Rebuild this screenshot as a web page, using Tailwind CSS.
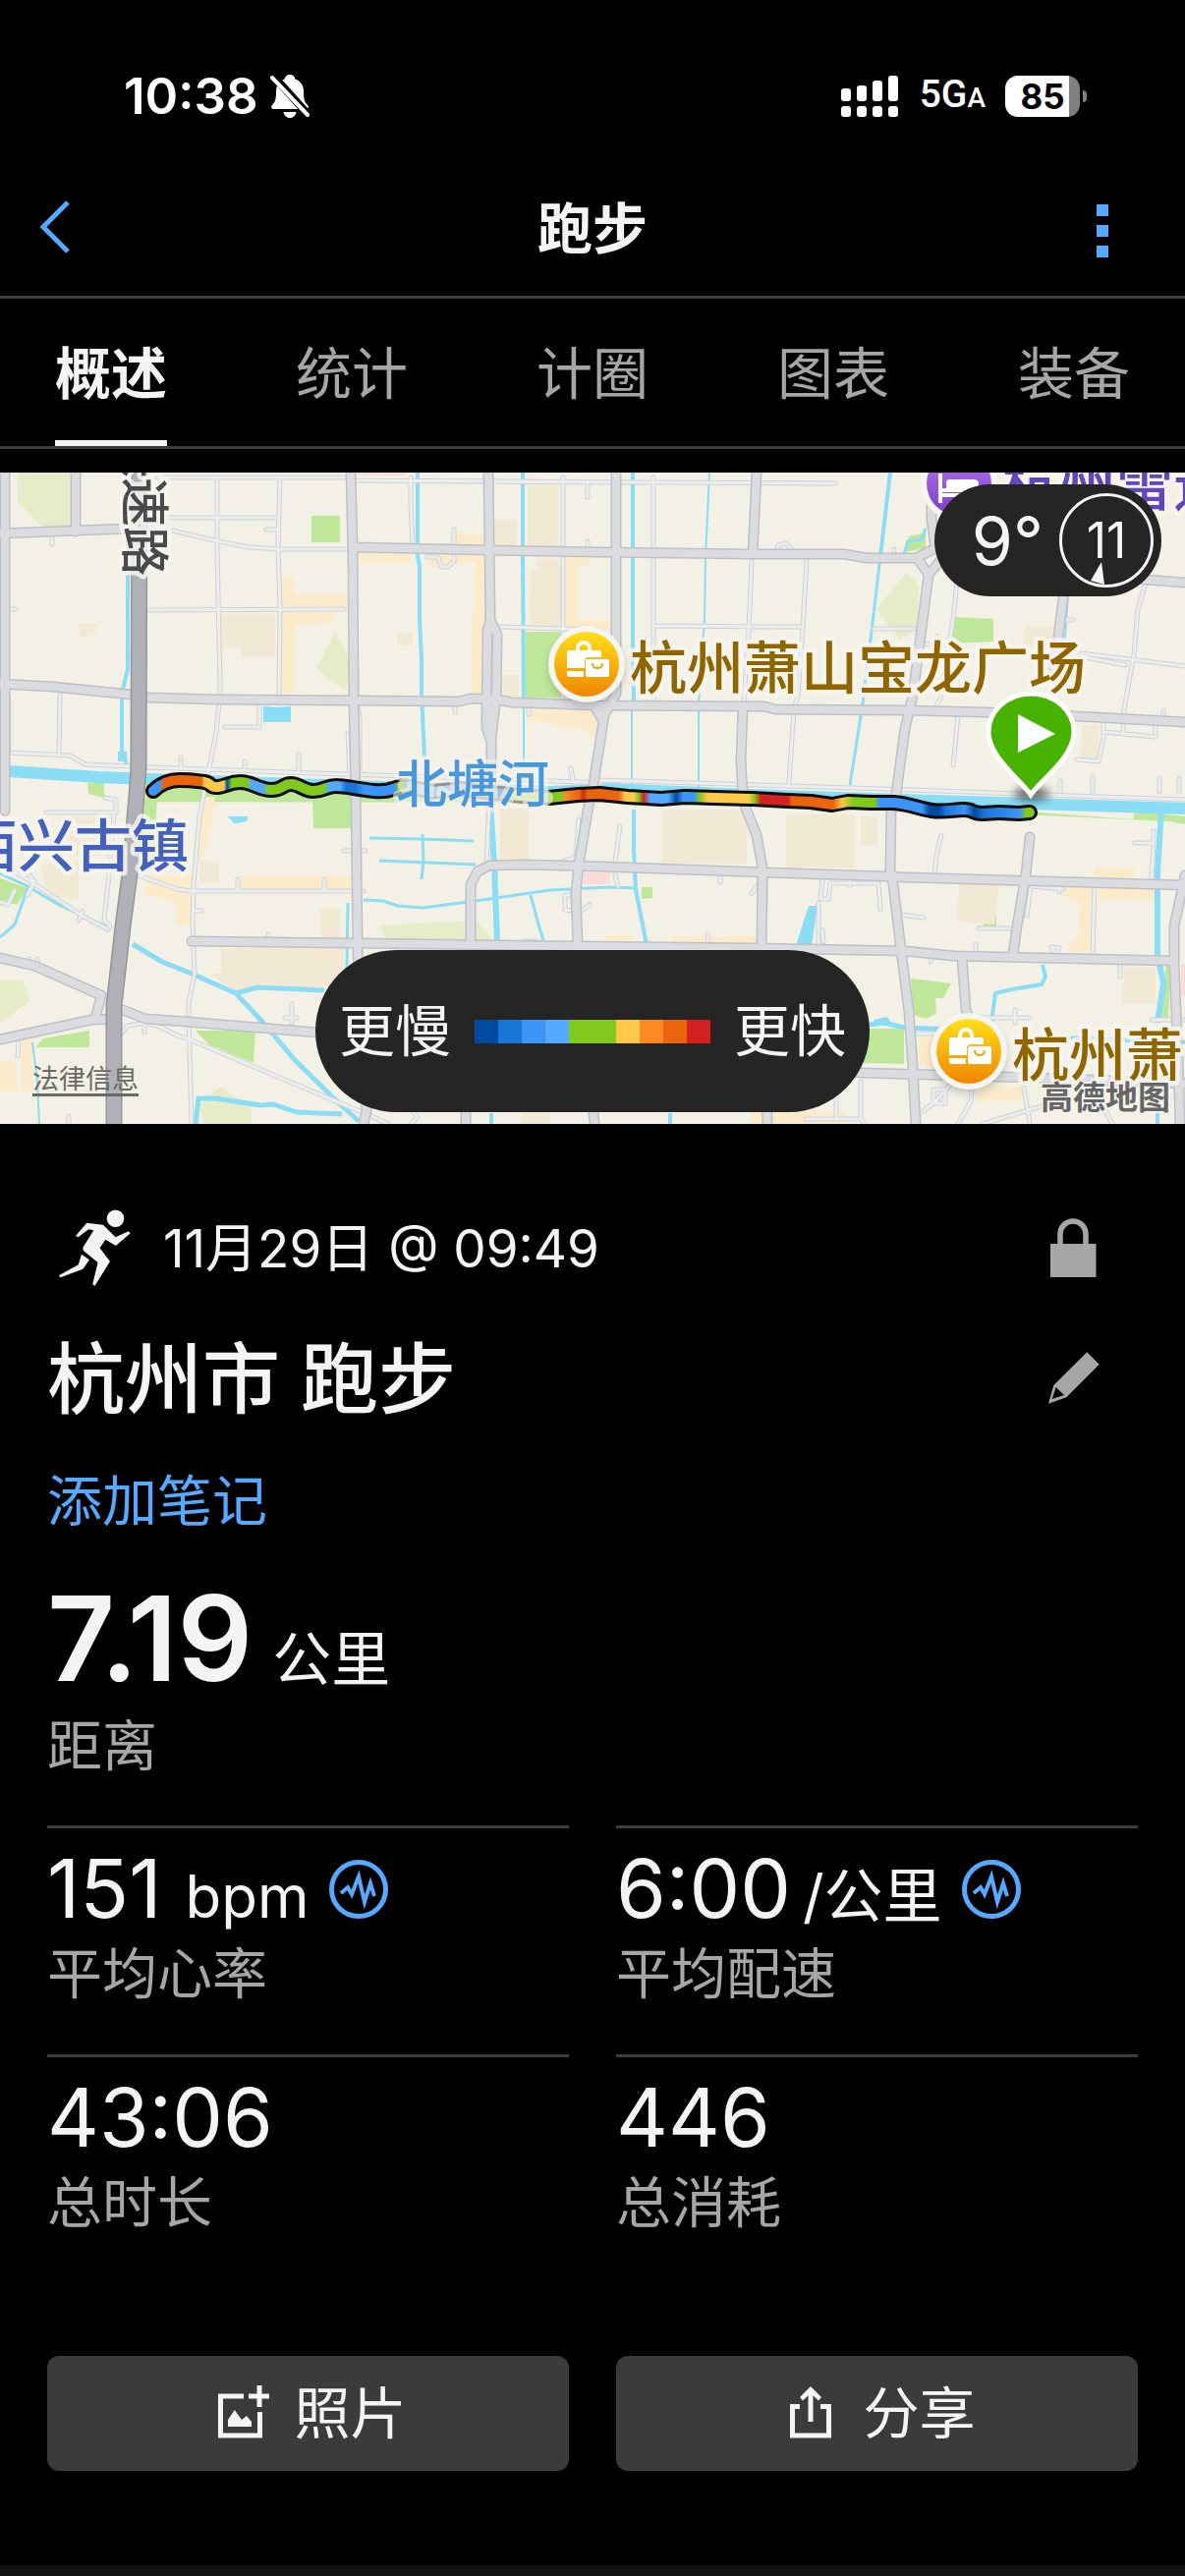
<!DOCTYPE html>
<html lang="zh-CN">

<head>
    <meta charset="UTF-8">
    <meta name="viewport" content="width=device-width, initial-scale=1.0">
    <title>跑步</title>
    <script src="https://cdn.jsdelivr.net/npm/@tailwindcss/browser@4"></script>
</head>

<body class="bg-black text-[#f4f4f4] font-['Inter','Noto_Sans_CJK_SC',sans-serif]">
    <div class="flex min-h-screen flex-col">

        <!-- Status bar -->
        <div class="flex h-40 items-center justify-between pt-9 pr-[100px] pl-[126px] text-white">
            <div class="flex items-center gap-3">
                <span class="text-[51px] leading-[60px] font-semibold">10:38</span>
                <svg class="h-11 w-10" viewBox="0 0 40 44" fill="#fff">
                    <path d="M20 0c3 0 5 2 5.500 4.500C31 6.500 34 11 34 17c0 8 1 11 4 14 1.500 1.500 1 4-2 4H4c-3 0-3.500-2.500-2-4 3-3 4-6 4-14C6 11 9 6.500 14.500 4.500 15 2 17 0 20 0z" />
                    <path d="M13.500 38h13c-.5 3.500-3 6-6.500 6s-6-2.500-6.500-6z" />
                    <path d="M3 1L39 41" stroke="#000" stroke-width="8" />
                    <path d="M2 3L38 41" stroke="#fff" stroke-width="4" stroke-linecap="round" />
                </svg>
            </div>
            <div class="flex items-center gap-5">
                <svg class="h-[42px] w-[60px]" viewBox="0 0 60 42" fill="#fff">
                    <rect x="0" y="13" width="10" height="13" rx="3" />
                    <rect x="16" y="10" width="10" height="16" rx="3" />
                    <rect x="32" y="5" width="10" height="21" rx="3" />
                    <rect x="48" y="0" width="10" height="26" rx="3" />
                    <rect x="0" y="31" width="10" height="11" rx="3" />
                    <rect x="16" y="31" width="10" height="11" rx="3" />
                    <rect x="32" y="31" width="10" height="11" rx="3" />
                    <rect x="48" y="31" width="10" height="11" rx="3" />
                </svg>
                <span class="font-['Roboto',sans-serif] text-[39px] leading-[60px] font-medium">5G<span class="text-[28px]">A</span></span>
                <div class="flex items-center gap-[3px]">
                    <div class="flex h-[42px] w-[76px] items-center justify-center rounded-[13px] bg-linear-to-r from-white from-85% to-[#808080] to-85% text-[35px] leading-none font-bold text-black">85</div>
                    <div class="h-3 w-1 rounded-r-full bg-[#808080]"></div>
                </div>
            </div>
        </div>

        <!-- Header -->
        <header class="flex h-36 items-center justify-between border-b-[3px] border-[#3c3c3c] pr-[74px] pl-10">
            <button type="button" aria-label="返回" class="w-[54px]">
                <svg class="h-[54px] w-8" viewBox="0 0 32 54" fill="none" stroke="#55a9ff" stroke-width="5">
                    <path d="M29 2L4 27L29 52" />
                </svg>
            </button>
            <h1 class="pt-1 text-[56px] leading-[64px] font-semibold">跑步</h1>
            <button type="button" aria-label="更多" class="flex w-5 flex-col items-center gap-[9px] pt-2">
                <span class="size-3 bg-[#55a9ff]"></span>
                <span class="size-3 bg-[#55a9ff]"></span>
                <span class="size-3 bg-[#55a9ff]"></span>
            </button>
        </header>

        <nav class="flex h-[153px] justify-between border-b-[3px] border-[#3c3c3c] px-14 pt-1 text-[57px] leading-[64px] text-[#a6a6a6]">
            <a href="#" class="flex items-center border-y-[6px] border-t-transparent border-b-[#f4f4f4] font-semibold text-[#f4f4f4]">概述</a>
            <a href="#" class="flex items-center">统计</a>
            <a href="#" class="flex items-center">计圈</a>
            <a href="#" class="flex items-center">图表</a>
            <a href="#" class="flex items-center">装备</a>
        </nav>

        <!-- Map -->
        <section class="relative mt-6 h-[663px] overflow-hidden bg-[#f3f0e5]">
            <svg class="h-full w-full" viewBox="0 0 1206 663" preserveAspectRatio="xMidYMid slice" font-family="'Noto Sans CJK SC', sans-serif">
                <defs>
                    <linearGradient id="pace" gradientUnits="userSpaceOnUse" x1="100" x2="1100" y1="0" y2="0">
                        <stop offset=".062" stop-color="#3c95f6" /><stop offset=".067" stop-color="#e9640c" />
                        <stop offset=".105" stop-color="#e9640c" /><stop offset=".108" stop-color="#fdc94b" />
                        <stop offset=".128" stop-color="#fdc94b" /><stop offset=".131" stop-color="#004a9f" />
                        <stop offset=".136" stop-color="#82c91e" /><stop offset=".152" stop-color="#82c91e" />
                        <stop offset=".155" stop-color="#55a9ff" /><stop offset=".169" stop-color="#55a9ff" />
                        <stop offset=".172" stop-color="#82c91e" /><stop offset=".230" stop-color="#82c91e" />
                        <stop offset=".235" stop-color="#55a9ff" /><stop offset=".246" stop-color="#55a9ff" />
                        <stop offset=".252" stop-color="#1975d6" /><stop offset=".262" stop-color="#1975d6" />
                        <stop offset=".270" stop-color="#3c95f6" /><stop offset=".302" stop-color="#3c95f6" />
                        <stop offset=".305" stop-color="#82c91e" /><stop offset=".320" stop-color="#55a9ff" />
                        <stop offset=".400" stop-color="#55a9ff" /><stop offset=".410" stop-color="#1975d6" />
                        <stop offset=".420" stop-color="#82c91e" /><stop offset=".472" stop-color="#82c91e" />
                        <stop offset=".475" stop-color="#fb8a25" /><stop offset=".490" stop-color="#e9640c" />
                        <stop offset=".494" stop-color="#d32121" /><stop offset=".498" stop-color="#e9640c" />
                        <stop offset=".530" stop-color="#e9640c" /><stop offset=".536" stop-color="#fdc94b" />
                        <stop offset=".545" stop-color="#fdc94b" /><stop offset=".550" stop-color="#82c91e" />
                        <stop offset=".555" stop-color="#d32121" /><stop offset=".562" stop-color="#55a9ff" />
                        <stop offset=".580" stop-color="#55a9ff" /><stop offset=".588" stop-color="#004a9f" />
                        <stop offset=".595" stop-color="#3c95f6" /><stop offset=".606" stop-color="#3c95f6" />
                        <stop offset=".612" stop-color="#82c91e" /><stop offset=".620" stop-color="#fdc94b" />
                        <stop offset=".662" stop-color="#fdc94b" /><stop offset=".668" stop-color="#82c91e" />
                        <stop offset=".674" stop-color="#d32121" /><stop offset=".702" stop-color="#d32121" />
                        <stop offset=".706" stop-color="#e9640c" /><stop offset=".748" stop-color="#e9640c" />
                        <stop offset=".757" stop-color="#fdc94b" /><stop offset=".768" stop-color="#82c91e" />
                        <stop offset=".790" stop-color="#82c91e" /><stop offset=".795" stop-color="#3c95f6" />
                        <stop offset=".838" stop-color="#3c95f6" /><stop offset=".846" stop-color="#004a9f" />
                        <stop offset=".856" stop-color="#004a9f" /><stop offset=".862" stop-color="#1975d6" />
                        <stop offset=".882" stop-color="#3c95f6" /><stop offset=".892" stop-color="#004a9f" />
                        <stop offset=".902" stop-color="#1975d6" /><stop offset=".938" stop-color="#3c95f6" />
                        <stop offset=".944" stop-color="#82c91e" />
                    </linearGradient>
                    <linearGradient id="shop" x1="0" x2="0" y1="0" y2="1">
                        <stop offset="0" stop-color="#ffdf1c" /><stop offset="1" stop-color="#f08600" />
                    </linearGradient>
                    <linearGradient id="hotel" x1="0" x2="0" y1="0" y2="1">
                        <stop offset="0" stop-color="#b774ee" /><stop offset="1" stop-color="#7a3fc9" />
                    </linearGradient>
                    <filter id="soft" x="-50%" y="-50%" width="200%" height="200%">
                        <feGaussianBlur stdDeviation="5" />
                    </filter>
                    <g id="shop-pin">
                        <circle r="38" cy="5" fill="#000" opacity=".2" filter="url(#soft)" />
                        <circle r="39" fill="#f6f5f0" />
                        <circle r="33" fill="url(#shop)" />
                        <path d="M-9 -14v-2a6 6 0 0 1 12 0v2" fill="none" stroke="#fff" stroke-width="4" />
                        <path d="M-18 -14h31q2 0 2 2v5H2q-4 0-4 4v7h-18v-16q0-2 2-2zM-20 7h17v6h-15q-2 0-2-2z" fill="#fff" />
                        <rect x="-1" y="-5" width="24" height="18" rx="2" fill="#fff" />
                        <path d="M6 -1q0 5 5 5t5-5" fill="none" stroke="#f4a610" stroke-width="2" />
                    </g>
                    <!-- road geometry is stroked twice: casing first, then fill -->
                    <g id="minor">
                        <path d="M160 5H352M362 8L850 11M362 8L600 10M132 46H282M175 59L218 69L253 76L283 78H354M221 5V75L223 175L224 210V229M285 5L283 78L285 135L284 230M418 5V30L420 76M573 5V232M435 86H446L449 96H456L462 90V85M462 58V74M598 10V25M598 70V76" />
                        <path d="M151 140L350 139M504 157L573 159L610 160M9 139H16M53 65V73M271 58H283V70M9 230L9 284M61 226L60 285M9 285L71 288L87 297L132 299L150 300L350 307L540 313L610 316" />
                        <path d="M264 233V259H229M223 233L220 265L211 310L203 350L197 420L196 460L198 510L192 540V553L195 663M184 291V300M249 294V301M304 287V302M363 233L366 250V308M354 265L356 306M463 238V244M538 240V246M581 301L583 312M608 313L900 322L1206 333" />
                        <path d="M665 5V232M666 156L815 157M889 159H930M790 82L792 74L800 72L808 80M821 87L817 160L812 228L808 240L803 316M910 78V85M974 110L970 150L957 230L952 240M954 166V180M937 174L963 176M765 90L762 161L757 235M975 247L970 298M1166 112L1158 140L1154 185L1143 247M1084 150H1092M1100 184L1206 197M1100 187L1145 196M1123 250V270L1118 294L1096 292M1123 264L1176 269V252M1143 250V264M1184 243V250M1079 314V325M1112 309V325M1180 311V325M1200 312V325" />
                        <path d="M47 346H118V333L107 331M0 398L28 414L85 452L110 465M116 346L112 400L106 455L112 462M30 410L35 416L28 430M80 456L84 447M140 410L180 424L195 426L360 426H370M242 426V414M330 425V414M205 446H198M273 470V474M350 385H372M498 334L495 400M589 353L586 392L569 397M575 430H585M575 430V445L590 447L600 440M533 477H545" />
                        <path d="M30 495V502M38 495V506M124 570L130 563L148 560L163 564L178 572L195 578L380 656L395 663M147 562V570M19 576L18 594M297 541V560M290 555H302M70 655V663M0 437L8 440L15 425M420 650L425 656L418 663" />
                        <path d="M631 360L626 396V410L629 421M733 409V417M771 420L765 428M779 410V440L775 480M837 415L835 434H843L845 418H894L896 445M865 413V420M833 438V481M837 465L838 478M720 470L721 482M958 369L954 385L951 408M1155 377H1174L1172 413M1174 365V378M996 464H1031M1045 451L1049 421L1082 424M1078 419V427M1114 420L1112 492M917 450L940 453M993 480V488M1070 483L1078 484L1076 489L1071 486M1140 502V513M991 555H1048M1033 547V560M930 571H960M1172 557H1206M949 492L947 498M851 620V658M876 620V658H820M876 658L880 663M940 650L952 640L968 622M952 628H962V642H950V628M975 663L988 640L990 622M1042 626L1048 663M1000 663L1060 645L1080 635M1120 640L1132 663" />
                    </g>
                    <g id="major">
                        <path d="M5 0V344M77 0V60M0 62L78 59L132 57L165 55M357 0L359 80L360 232L362 330L364 480L366 560L373 649L370 663M362 76L498 79L610 81L766 83H859L882 87H932L952 77L948 47V0M934 88L945 104L929 227L921 261L912 327L907 339L906 406L909 419L917 486L925 549L929 606L932 663M965 80L945 104M1040 95L1166 109L1206 112" />
                        <path d="M497 0L499 150L496 161L495 260L500 274V334M499 150L506 165L505 227L500 270M0 215L54 218L134 226L150 229L222 231L360 232L467 233L479 230L506 231L521 234L610 237L778 238L789 241L921 242L1002 244L1095 248L1206 254" />
                        <path d="M627 0V225L615 247L604 317L599 339L589 399L586 429L588 479L596 560L605 663M770 0L766 83M756 239L754 294L756 327L758 339L770 369L776 402L775 480L781 663M1083 120L1077 167L1073 200M1048 371L1044 409L1035 462L1031 490" />
                        <path d="M479 479V419L486 406L498 400L533 399L610 401L778 407L901 411L921 412L1206 420M195 477L362 479L584 482L770 484L921 487L971 492L1195 497M979 494L983 546L990 570M1206 410L1195 462V502L1199 596L1201 663" />
                        <path d="M0 494L35 502L103 532L97 556M0 577L93 557L117 556M120 545L148 556L191 559L323 570L878 611L1056 616L1206 622M474 640V663M606 239L612 250" />
                    </g>
                    <path id="express" d="M142 -10L141 300L139 329L132 409L125 462L119 516L116 542V673" />
                    <path id="route" d="M156 324C162 318 170 313 183 313S200 314 208 315S213 321 222 320S233 315 245 315S263 323 276 323S287 317 296 317S309 324 319 324S332 319 342 319S362 322 381 324S401 319 412 319L440 325L470 322L500 326L530 329L559 331L588 328L610 327L639 330L673 332L697 330L727 331L766 332L801 334L825 335L847 338L863 335L886 336L909 336C925 337 935 342 948 344S970 343 981 343S988 347 1000 347L1017 346L1037 347L1048 346" />
                </defs>

                <!-- land use -->
                <g fill="#e7ecc8">
                    <path d="M18 0H71V55H42L18 30zM341 162L356 190V210L350 222L322 200zM923 101L935 115L933 160L915 170L892 139zM387 461L486 456L502 478L392 475zM0 517L23 517L30 538L0 561zM223 625L256 645V663H208L203 645z" />
                </g>
                <g fill="#bfe79a">
                    <path d="M317 44H346V71H317zM535 162H571V229L535 230zM89 316H106V331L90 327zM148 310L620 326V336L150 335zM318 330H357V362H319zM970 147L1011 149V172L968 174zM925 65L942 61V77L920 81zM920 336L1153 353L1155 345L1206 350V358L1190 355L1060 349L920 345zM1001 451H1014V463H1001zM653 422H664V433L653 434zM0 413L28 423L17 440L0 435zM147 331H160L156 400L140 412zM91 568V585H36L44 576zM199 568H260L258 601L212 582zM927 515L968 520L960 535H952L953 550L943 556L929 552zM880 566L920 566V602L878 601zM1187 500H1192L1189 556H1180z" />
                </g>
                <g fill="#fcebca">
                    <path d="M462 62H494V76H462zM366 82H418V92H366zM430 82H497V225H480V160L484 90L440 98zM286 106H298L300 124H353V138H286zM286 141H340V152L300 155V225H286zM576 86H600V95H588V150H610V160H576zM538 242H606V264L538 252zM205 330H219L214 370L205 395H200zM243 410L357 410V424H243zM150 410H195V460L180 460L178 435L146 430zM0 600L16 598L17 630H0zM22 578H33V630H22zM600 150H624V160H600zM616 470H643V480H616zM683 472H772V481H683zM1080 421H1114V488L1085 487L1098 470L1098 440L1082 430zM1118 420H1174V434H1118zM934 574L1000 573V604H936zM1000 625H1040V640H992zM765 650H860V663H765zM1114 402H1154V412H1114zM600 242L607 245V270L600 268z" />
                </g>
                <g fill="#f2e9d4">
                    <path d="M225 144H280V188H246V178H225zM404 164H420V176H404zM537 12H568V75H537zM503 48H526V75H503zM547 88H573V160H539L540 100H547zM510 206H528V228H510zM79 154L100 153L96 165L82 168zM1043 156L1071 157V176L1042 175zM1102 257H1119L1117 291H1099zM674 343H760V398H674zM800 348H870V402H800zM876 350H893V380H876zM509 342H538V394H509zM326 443H346V473H326zM225 484H350V522L240 528L212 510H225zM976 419H1017L1012 460L974 457zM1144 504H1176V541H1142zM60 350H110V390H60zM40 400L80 395V435L50 430zM203 396H223V417H203zM530 652H560V663H530z" />
                </g>
                <g fill="#fddcd8">
                    <path d="M364 0H412V3H364zM594 407H621V419H594zM1202 500H1206V533H1202z" />
                </g>

                <!-- water -->
                <g fill="none" stroke="#8bdcf5" stroke-linejoin="round">
                    <path d="M8 304L100 310L150 312L300 317L450 322L560 325L620 322L760 328L950 334L1206 342" stroke-width="12" />
                    <path d="M130 60V200L124 225V283L130 300M425 0V85L427 95V150L429 190V225L432 290M532 0V85L533 230" stroke-width="4" />
                    <path d="M533 230V300M722 0L718 85L717 150L711 235V320M1087 125L1083 180M33 580L38 620L40 663M643 238L643 318" stroke-width="2" />
                    <path d="M644 0V165L645 235M906 0L896 85M645 343V385L647 425L658 480" stroke-width="4" />
                    <path d="M896 85L886 170L878 235L865 318M920 83L924 70L938 68L942 57" stroke-width="3" />
                    <path d="M499 335L503 400L506 477M1182 345L1178 405V490L1184 520L1178 560" stroke-width="6" />
                    <path d="M376 372L430 373L482 375M430 368L431 395L429 414M386 395L484 399M370 435L390 436L405 441L430 443L484 436L560 425L620 422L645 423M540 430L548 460L553 476M0 408L28 421L60 440L108 462M28 423L15 460L0 473M354 438L353 505" stroke-width="3" />
                    <path d="M135 480L165 498L195 510L240 530L262 524L330 527M240 530L268 560L300 598L345 642L365 660M885 562L900 560L920 565L1000 568M199 663L202 637L220 637L265 644L278 643L302 651L348 653" stroke-width="5" />
                    <path d="M1061 501L1064 513L1060 521L1030 526L1013 530L1009 560M1080 575L1206 580M1178 640V663M682 652V663M500 652V663" stroke-width="4" />
                </g>
                <g fill="#8bdcf5">
                    <path d="M268 238L282 239L296 238V254H268zM120 284H129V294H120zM823 441H832L826 481H810zM232 350L252 350V354L243 357H238zM890 557L902 554L910 562L885 563z" />
                </g>

                <!-- roads -->
                <g fill="none" stroke-linejoin="round" stroke-linecap="round">
                    <use href="#minor" stroke="#cfd2d5" stroke-width="5" />
                    <use href="#minor" stroke="#ebedee" stroke-width="3" />
                    <use href="#major" stroke="#bfc0c5" stroke-width="11" />
                    <use href="#major" stroke="#dbdce0" stroke-width="8" />
                    <use href="#express" stroke="#94959b" stroke-width="17" />
                    <use href="#express" stroke="#b0b1b7" stroke-width="14" />
                </g>

                <!-- route -->
                <g fill="none" stroke-linejoin="round" stroke-linecap="round">
                    <use href="#route" stroke="#0c0c0c" stroke-width="16" />
                    <use href="#route" stroke="url(#pace)" stroke-width="10" />
                    <path d="M414 319L440 325L470 322L500 326L530 329L554 331" stroke="#f3f0e5" stroke-opacity=".6" stroke-width="18" />
                </g>

                <!-- place labels -->
                <g paint-order="stroke" stroke-linejoin="round" stroke="#f6f4ee" stroke-opacity=".85" stroke-width="9" font-weight="500">
                    <text x="403" y="336" font-size="52" fill="#4a98dc" stroke-opacity=".6">北塘河</text>
                    <text x="641" y="220" font-size="58" fill="#8f6500">杭州萧山宝龙广场</text>
                    <text x="1030" y="614" font-size="58" fill="#8f6500">杭州萧</text>
                    <text x="1020" y="34" font-size="58" fill="#6347ba">杭州雷迪</text>
                    <text x="-40" y="401" font-size="58" fill="#4461bd">西兴古镇</text>
                    <text transform="translate(129 -45) rotate(90)" font-size="50" fill="#4a4a4c">快速路</text>
                    <text x="1059" y="648" font-size="33" fill="#666" stroke-width="4" font-weight="700">高德地图</text>
                </g>

                <use href="#shop-pin" x="597" y="195" />
                <use href="#shop-pin" x="986" y="589" />
                <g transform="translate(976 11)">
                    <circle r="39" fill="#f6f5f0" />
                    <circle r="33" fill="url(#hotel)" />
                    <path d="M-19 -10V20M-19 12H20V20M-19 7H20" fill="none" stroke="#fff" stroke-width="4" />
                    <path d="M-13 5V-1q0-3 3-3H15q5 0 5 5v4z" fill="#fff" />
                </g>

                <ellipse cx="1050" cy="327" rx="18" ry="7" fill="#000" opacity=".55" filter="url(#soft)" />
                <path d="M1049 328C1040 314 1006 290 1006 264a43.500 39 0 0 1 87 0C1093 290 1058 314 1049 328z" fill="#47b300" stroke="#fff" stroke-width="5" />
                <path d="M1036 246L1074 266L1036 285z" fill="#fafdfd" />
            </svg>

            <div class="absolute top-3 right-6 flex h-[114px] w-[231px] items-center justify-end gap-4 rounded-full bg-[#252525] pr-2">
                <span class="text-[68px] leading-none">9°</span>
                <div class="relative flex size-[96px] items-center justify-center rounded-full border-[3px] border-[#f4f4f4] text-[50px] leading-none">11
                    <svg class="absolute bottom-0 left-7 h-[23px] w-4" viewBox="0 0 16 23" fill="#f4f4f4">
                        <path d="M12 0L15 23L1 19z" />
                    </svg>
                </div>
            </div>

            <a href="#" class="absolute bottom-7 left-[33px] border-b-[3px] border-[#6b6b66] text-[27px] leading-[28px] text-[#6b6b66]">法律信息</a>

            <div class="absolute bottom-3 left-1/2 flex h-[165px] -translate-x-1/2 items-center gap-6 rounded-full bg-[#252525] px-6 text-[57px] leading-[64px] whitespace-nowrap">
                <span>更慢</span>
                <div class="flex h-6 *:w-6">
                    <i class="bg-[#004a9f]"></i>
                    <i class="bg-[#1975d6]"></i>
                    <i class="bg-[#3c95f6]"></i>
                    <i class="bg-[#55a9ff]"></i>
                    <i class="bg-[#82c91e]"></i>
                    <i class="bg-[#82c91e]"></i>
                    <i class="bg-[#fdc94b]"></i>
                    <i class="bg-[#fb8a25]"></i>
                    <i class="bg-[#e9640c]"></i>
                    <i class="bg-[#d32121]"></i>
                </div>
                <span>更快</span>
            </div>
        </section>

        <!-- Activity details -->
        <main class="flex grow flex-col px-12 pt-[87px]">
            <div class="flex h-20 items-center justify-between">
                <div class="flex items-center gap-6">
                    <svg class="h-20 w-[94px]" viewBox="-4 0 94 80" fill="#f4f4f4">
                        <circle cx="65.500" cy="9.300" r="8.800" />
                        <path d="M36.300 13.700L53 15.700L65.500 28.300L78.700 22.300L80.700 24.300L65.900 37L55.400 30.700L49.600 39.300L60 53L44.500 77.700L42.200 76.300L47.600 54L34 43Q31 40 33.500 37L43.300 21.300L38.300 20.300L27.400 28.300L25 27z" />
                        <path d="M30.900 45.700L39 51.300L32.400 60.700L9.500 69.300L7.900 67.300L27.800 56.300z" />
                    </svg>
                    <span class="text-[53px] leading-[64px]">11月29日 @ 09:49</span>
                </div>
                <button type="button" aria-label="隐私" class="mr-9">
                    <svg class="h-16 w-14" viewBox="-2 0 56 64" fill="#a6a6a6">
                        <path d="M1 27H47.500V61H1z" />
                        <path d="M11 28V17a13 13 0 0 1 26 0v11" fill="none" stroke="#a6a6a6" stroke-width="5.500" />
                    </svg>
                </button>
            </div>

            <div class="mt-[53px] flex h-20 items-center justify-between">
                <h2 class="text-[79px] leading-[80px] font-medium">杭州市 跑步</h2>
                <button type="button" aria-label="编辑" class="mr-9">
                    <svg class="h-16 w-14" viewBox="-2 0 56 64" fill="#a6a6a6" fill-rule="evenodd">
                        <path d="M38.300 4.300L50.700 16.700L17.300 50.300L-1 56.700L4.300 38zM6.700 40L15 48L2.700 52z" />
                    </svg>
                </button>
            </div>

            <a href="#" class="mt-[52px] self-start text-[56px] leading-[64px] text-[#55a9ff]">添加笔记</a>

            <div class="mt-12 flex items-baseline gap-5">
                <span class="text-[120px] leading-[120px] font-semibold">7.19</span>
                <span class="text-[60px] leading-[64px]">公里</span>
            </div>
            <p class="mt-[17px] text-[56px] leading-[64px] text-[#a6a6a6]">距离</p>

            <div class="mt-[49px] grid grid-cols-2 gap-x-12">
                <div class="h-[233px] border-t-[3px] border-[#3c3c3c] pt-5">
                    <div class="flex items-center gap-5">
                        <div class="flex items-baseline gap-6">
                            <span class="text-[82px] leading-[84px]">151</span>
                            <span class="text-[60px] leading-[64px]">bpm</span>
                        </div>
                        <svg class="size-[60px]" viewBox="0 0 60 60" fill="none" stroke="#55a9ff">
                            <circle cx="30" cy="30" r="27.500" stroke-width="5" />
                            <path d="M12 34L19 28L23 35L30 17L36 43L42 24L46 37" stroke-width="4" stroke-miterlimit="10" />
                        </svg>
                    </div>
                    <p class="mt-3 text-[56px] leading-[64px] text-[#a6a6a6]">平均心率</p>
                </div>
                <div class="h-[233px] border-t-[3px] border-[#3c3c3c] pt-5">
                    <div class="flex items-center gap-5">
                        <div class="flex items-baseline gap-3">
                            <span class="text-[82px] leading-[84px]">6:00</span>
                            <span class="text-[60px] leading-[64px]">/公里</span>
                        </div>
                        <svg class="size-[60px]" viewBox="0 0 60 60" fill="none" stroke="#55a9ff">
                            <circle cx="30" cy="30" r="27.500" stroke-width="5" />
                            <path d="M12 34L19 28L23 35L30 17L36 43L42 24L46 37" stroke-width="4" stroke-miterlimit="10" />
                        </svg>
                    </div>
                    <p class="mt-3 text-[56px] leading-[64px] text-[#a6a6a6]">平均配速</p>
                </div>
                <div class="h-[233px] border-t-[3px] border-[#3c3c3c] pt-5">
                    <div class="text-[82px] leading-[84px]">43:06</div>
                    <p class="mt-3 text-[56px] leading-[64px] text-[#a6a6a6]">总时长</p>
                </div>
                <div class="h-[233px] border-t-[3px] border-[#3c3c3c] pt-5">
                    <div class="text-[82px] leading-[84px]">446</div>
                    <p class="mt-3 text-[56px] leading-[64px] text-[#a6a6a6]">总消耗</p>
                </div>
            </div>

            <div class="mt-[74px] grid grid-cols-2 gap-12 pb-24">
                <button type="button" class="flex h-[117px] items-center justify-center gap-6 rounded-xl bg-[#3b3b3b] text-[57px] leading-[64px]">
                    <svg class="size-[62px]" viewBox="0 0 62 62" fill="none" stroke="#f4f4f4" stroke-width="5">
                        <path d="M34 13H10.500V53H50.500V29M50 2V24M39 13H60" />
                        <path d="M18 44V37L24.700 27L32 37L37 33L42 39V44z" fill="#f4f4f4" stroke="none" />
                    </svg>
                    照片
                </button>
                <button type="button" class="flex h-[117px] items-center justify-center gap-6 rounded-xl bg-[#3b3b3b] text-[57px] leading-[64px]">
                    <svg class="size-[62px]" viewBox="0 0 62 62" fill="none" stroke="#f4f4f4" stroke-width="5">
                        <path d="M21 23.500H13.500V53H50.500V23.500H42M32 8V39" />
                        <path d="M32 3L43 14L40 17.500L32 10L24 17.500L21 14z" fill="#f4f4f4" stroke="none" />
                    </svg>
                    分享
                </button>
            </div>
        </main>

        <div class="h-[11px] bg-[#111]"></div>
    </div>
</body>

</html>
